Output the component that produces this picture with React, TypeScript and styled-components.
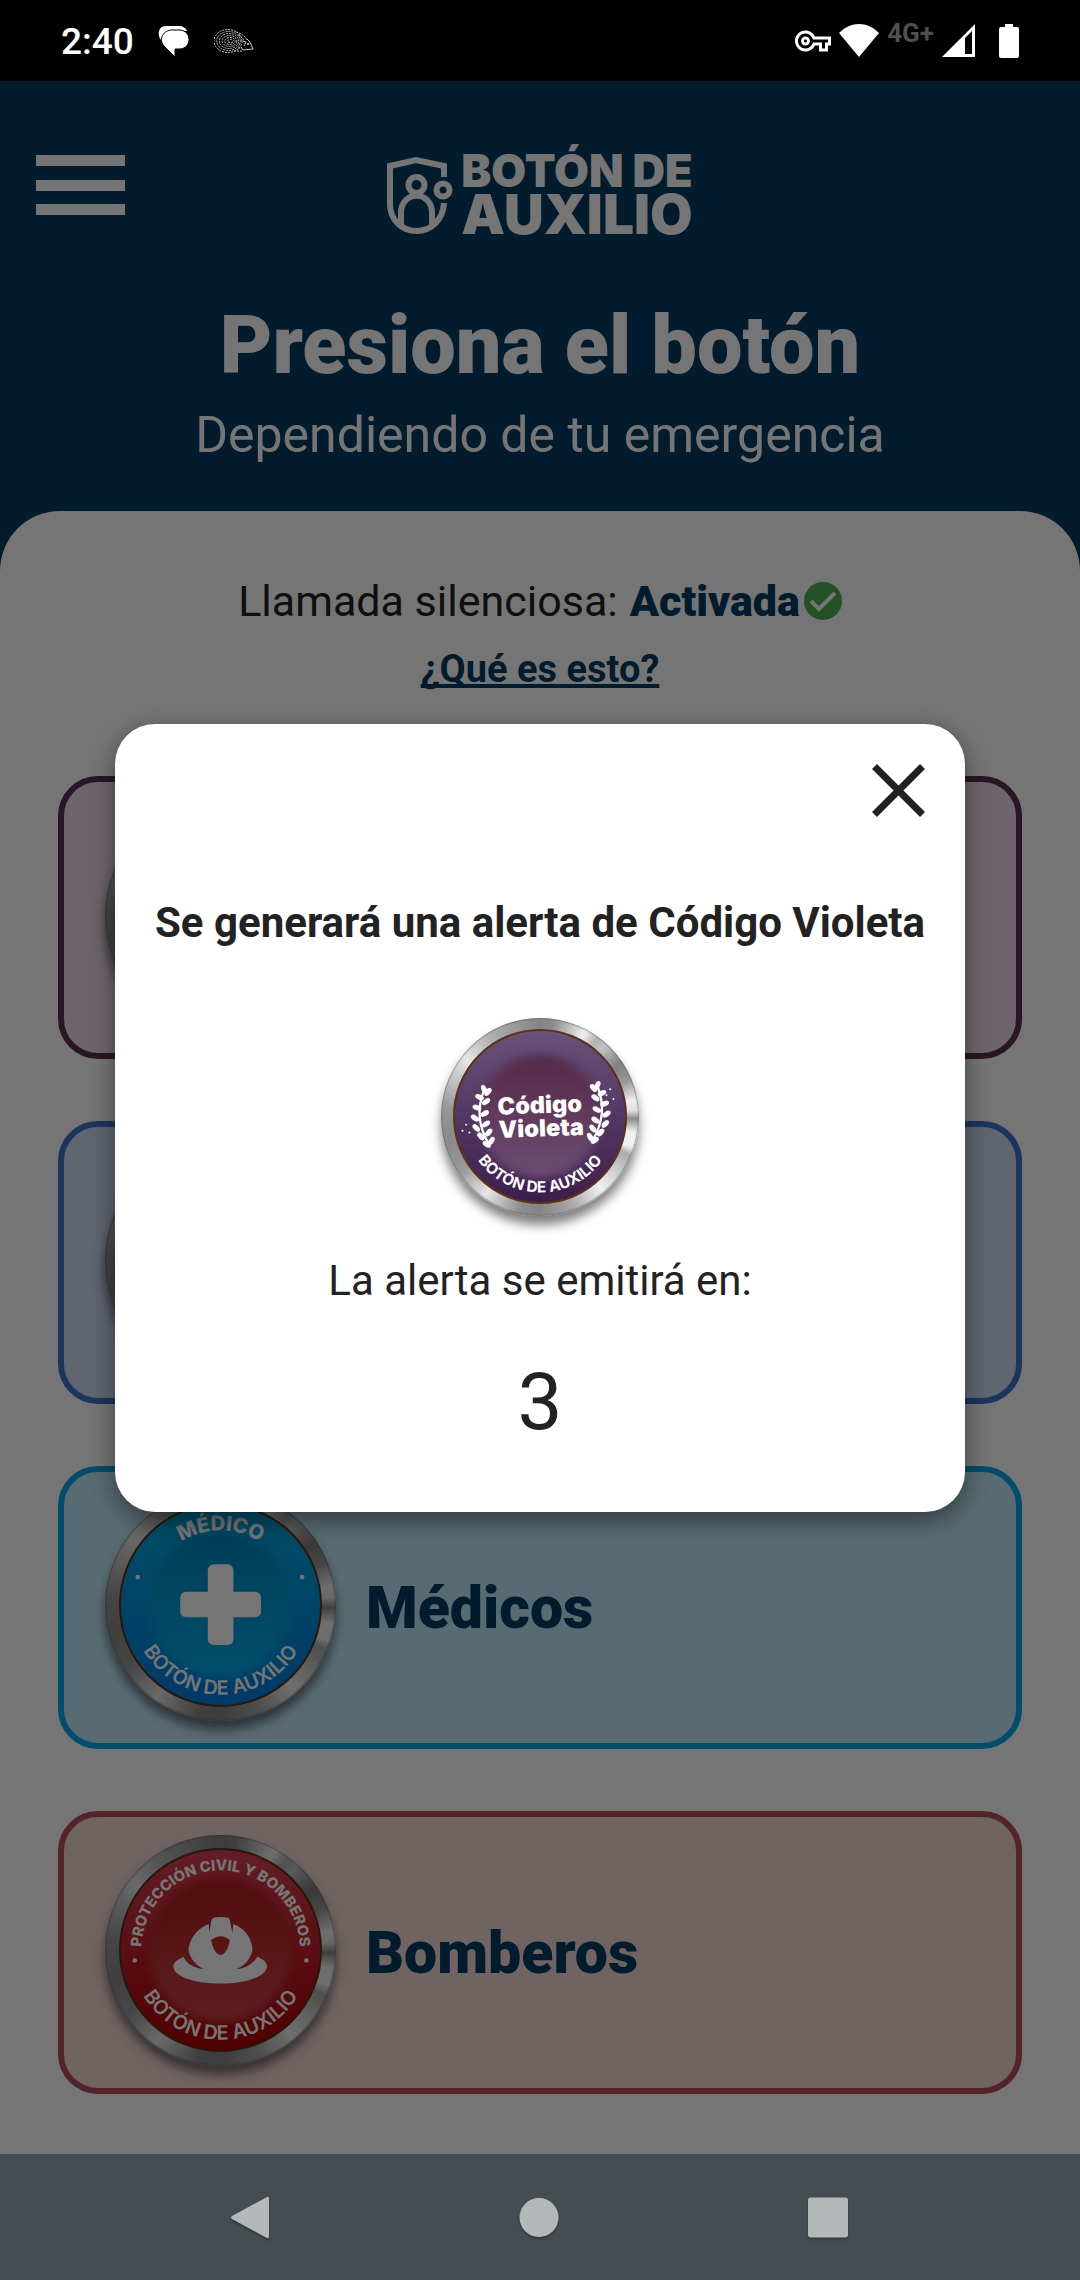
import React, { useId } from "react";
import styled, { createGlobalStyle } from "styled-components";
import { MdOutlineVpnKey } from "react-icons/md";

const color = {
  navy: "#063b62",
  white: "#ffffff",
  ink: "#222222",
  navBar: "#454d52",
  navIcon: "#b4b8b9",
  green: "#4caf50",
};

const GlobalStyle = createGlobalStyle`
  *, *::before, *::after { box-sizing: border-box; }
  body {
    margin: 0;
    font-family: Roboto, "Liberation Sans", sans-serif;
    color: ${color.ink};
    background: #000;
  }
  button { font: inherit; color: inherit; border: 0; background: none; padding: 0; cursor: pointer; }
  h1, h2, p { margin: 0; }
  svg { display: block; }
`;

const Phone = styled.div`
  display: flex;
  flex-direction: column;
  min-height: 100vh;
`;

/* ---------- status bar ---------- */

const StatusBar = styled.div`
  display: flex;
  align-items: center;
  justify-content: space-between;
  height: 81px;
  padding: 0 61px;
  background: #000;
  color: ${color.white};
`;

const StatusGroup = styled.div<{ $gap: number }>`
  display: flex;
  align-items: center;
  gap: ${(p) => p.$gap}px;
`;

const Clock = styled.span`
  padding-top: 2px;
  font-size: 37px;
  font-weight: 500;
  line-height: 44px;
`;

const NetworkType = styled.span`
  padding-bottom: 16px;
  font-size: 26px;
  font-weight: 700;
  line-height: 28px;
  color: #4f4f4f;
`;

/* ---------- app ---------- */

const Screen = styled.div`
  position: relative;
  flex: 1;
  display: flex;
  flex-direction: column;
  background: ${color.navy};
`;

const Header = styled.header`
  padding: 55px 36px 44px;
  color: ${color.white};
  text-align: center;
`;

const TopBar = styled.div`
  display: grid;
  grid-template-columns: 1fr auto 1fr;
  align-items: center;
`;

const MenuButton = styled.button`
  display: flex;
  flex-direction: column;
  justify-content: space-between;
  width: 89px;
  height: 60px;
`;

const MenuLine = styled.span`
  height: 11px;
  background: ${color.white};
`;

const Brand = styled.div`
  display: flex;
  align-items: flex-end;
  gap: 8px;
  padding-top: 12px;
`;

const BrandName = styled.div`
  display: flex;
  flex-direction: column;
  font-family: Inter, Lato, sans-serif;
  font-weight: 900;
  text-align: left;
`;

const BrandLine = styled.span<{ $size: number; $line: number }>`
  font-size: ${(p) => p.$size}px;
  line-height: ${(p) => p.$line}px;
`;

const Title = styled.h1`
  margin-top: 64px;
  font-size: 81px;
  font-weight: 900;
  line-height: 96px;
`;

const Subtitle = styled.p`
  margin-top: 9px;
  font-size: 50px;
  line-height: 64px;
`;

const Panel = styled.main`
  flex: 1;
  display: flex;
  flex-direction: column;
  align-items: center;
  padding: 65px 58px 60px;
  border-radius: 60px 60px 0 0;
  background: ${color.white};
`;

const SilentCall = styled.p`
  display: flex;
  align-items: center;
  font-size: 43px;
  line-height: 50px;
`;

const Active = styled.strong`
  margin: 0 4px 0 12px;
  font-weight: 900;
  color: ${color.navy};
`;

const HelpLink = styled.a`
  margin-top: 21px;
  font-size: 38px;
  font-weight: 700;
  line-height: 44px;
  color: ${color.navy};
  text-decoration: underline;
  text-decoration-thickness: 4px;
  text-decoration-skip-ink: none;
`;

const CardList = styled.div`
  align-self: stretch;
  display: flex;
  flex-direction: column;
  gap: 62px;
  margin-top: 85px;
`;

const Card = styled.button<{ $border: string; $fill: string }>`
  display: flex;
  align-items: center;
  gap: 30px;
  height: 283px;
  padding: 0 42px 5px 41px;
  border: 6px solid ${(p) => p.$border};
  border-radius: 40px;
  background: ${(p) => p.$fill};
  text-align: left;
`;

const CardLabel = styled.span`
  padding-top: 6px;
  font-size: 59px;
  font-weight: 900;
  line-height: 68px;
  color: ${color.navy};
`;

/* ---------- medal ---------- */

const Ring = styled.span<{ $size: number }>`
  isolation: isolate;
  flex: none;
  display: grid;
  place-items: center;
  width: ${(p) => p.$size}px;
  height: ${(p) => p.$size}px;
  border-radius: 50%;
  background: conic-gradient(
    #848484 0deg, #8c8c8c 8deg, #f0f0f0 28deg, #b0b0b0 36deg, #c4c4c4 42deg,
    #808080 56deg, #999 68deg, #f0f0f0 80deg, #e0e0e0 86deg, #8a8a8a 91deg,
    #f0f0f0 99deg, #f0f0f0 108deg, #aaa 113deg, #cfcfcf 125deg, #f0f0f0 140deg,
    #a8a8a8 160deg, #848484 180deg, #8c8c8c 192deg, #e6e6e6 215deg,
    #9a9a9a 235deg, #8a8a8a 255deg, #969696 275deg, #e6e6e6 308deg,
    #b0b0b0 328deg, #848484 360deg
  );
  box-shadow: inset 0 0 1px 1px rgba(90, 90, 90, 0.5), 0 9px 11px rgba(0, 0, 0, 0.5);
`;

const Face = styled.span<{ $top: string; $bottom: string }>`
  display: grid;
  place-items: center;
  width: 88%;
  height: 88%;
  border: 2px solid #5b3214;
  border-radius: 50%;
  background: linear-gradient(${(p) => p.$top}, ${(p) => p.$bottom});
  overflow: hidden;

  > * { grid-area: 1 / 1; }
`;

const Glow = styled.span<{ $top: string; $bottom: string }>`
  width: 72%;
  height: 72%;
  border-radius: 50%;
  background: linear-gradient(${(p) => p.$top}, ${(p) => p.$bottom});
  filter: blur(5px);
`;

const Emblem = styled.svg`
  z-index: 1;
  width: 100%;
  height: 100%;
  overflow: visible;
  fill: ${color.white};
  font-family: Inter, Lato, sans-serif;
`;

type MedalColors = { outer: [string, string]; inner: [string, string] };

const palette: Record<"violet" | "blue" | "medical" | "fire", MedalColors> = {
  violet: { outer: ["#69527a", "#3d1d4c"], inner: ["#552846", "#6d4d75"] },
  blue: { outer: ["#3c6fc0", "#123a80"], inner: ["#1d4488", "#3c6fc0"] },
  medical: { outer: ["#00aae0", "#007ee0"], inner: ["#0086be", "#00aeec"] },
  fire: { outer: ["#d94154", "#ae0000"], inner: ["#b21c1c", "#ca4348"] },
};

function Medal({ size, colors, children }: { size: number; colors: MedalColors; children?: React.ReactNode }) {
  return (
    <Ring $size={size}>
      <Face $top={colors.outer[0]} $bottom={colors.outer[1]}>
        <Glow $top={colors.inner[0]} $bottom={colors.inner[1]} />
        {children}
      </Face>
    </Ring>
  );
}

/* Text that follows a circle centred on the origin. */
function ArcText({ radius, side, size, weight, children }: {
  radius: number; side: "top" | "bottom"; size: number; weight: number; children: string;
}) {
  const id = useId();
  const sweep = side === "top" ? 1 : 0;
  return (
    <>
      <path id={id} fill="none" d={`M${-radius} 0A${radius} ${radius} 0 0 ${sweep} ${radius} 0`} />
      <text fontSize={size} fontWeight={weight} textAnchor="middle">
        <textPath href={`#${id}`} startOffset="50%">{children}</textPath>
      </text>
    </>
  );
}

function MedicalEmblem() {
  return (
    <Emblem viewBox="-303 -303 606 606">
      <ArcText radius={226} side="top" size={62} weight={800}>MÉDICO</ArcText>
      <ArcText radius={274} side="bottom" size={60} weight={600}>BOTÓN DE AUXILIO</ArcText>
      <circle cx="-252" cy="-84" r="7" />
      <circle cx="248" cy="-84" r="7" />
      <rect x="-39" y="-123" width="78" height="246" rx="18" />
      <rect x="-123" y="-39" width="246" height="77" rx="18" />
    </Emblem>
  );
}

function FireEmblem() {
  return (
    <Emblem viewBox="-303 -303 606 606">
      <ArcText radius={241} side="top" size={45} weight={800}>PROTECCIÓN CIVIL Y BOMBEROS</ArcText>
      <ArcText radius={274} side="bottom" size={60} weight={600}>BOTÓN DE AUXILIO</ArcText>
      <circle cx="-261" cy="33" r="7" />
      <circle cx="261" cy="33" r="7" />
      <path d="M-22-97Q0-101 24-97L28-90L36-50L38-78C72-66 96-36 97 2C90 30 70 52 46 60C92 56 104 30 113 22C128 30 142 38 141 52C136 86 70 103 0 103S-140 86-144 52C-144 38-128 30-113 22C-104 40-88 56-50 60C-74 48-92 30-98 2C-94-38-68-66-36-78L-34-52L-28-90ZM-29-29C-24-4-14 16 0 16S24-4 28-29Q0-53-29-29Z" fillRule="evenodd" />
    </Emblem>
  );
}

const leaves: [number, number, number][] = [
  [-166, -82, 65], [-180, -58, 25], [-154, -74, -50], [-188, -26, 20], [-160, -44, -35],
  [-194, 6, 35], [-164, -8, -30], [-190, 36, 45], [-160, 24, -35], [-176, 62, 50],
  [-152, 50, -50], [-158, 86, 35], [-144, 76, -60],
];

function Laurel() {
  return (
    <g>
      <path d="M-166-80C-186-30-186 30-150 88" fill="none" stroke="#fff" strokeWidth="7" />
      {leaves.map(([x, y, angle]) => (
        <ellipse key={`${x},${y}`} cx={x} cy={y} rx="14" ry="8" transform={`rotate(${angle} ${x} ${y})`} />
      ))}
    </g>
  );
}

const sparks: [number, number][] = [
  [-226, 26], [-237, 45], [-216, 50], [214, -82], [203, -64], [224, -52],
];

function VioletEmblem() {
  return (
    <Emblem viewBox="-260 -260 520 520">
      <g transform="translate(-5 0)"><Laurel /></g>
      <g transform="translate(9 -12) scale(-1 1)"><Laurel /></g>
      {sparks.map(([x, y]) => <circle key={x} cx={x} cy={y} r="3" />)}
      <g transform="rotate(-2)" fontSize="72" fontWeight="900" textAnchor="middle">
        <text x="0" y="-9">Código</text>
        <text x="2" y="62">Violeta</text>
      </g>
      <ArcText radius={233} side="bottom" size={47} weight={700}>BOTÓN DE AUXILIO</ArcText>
    </Emblem>
  );
}

/* ---------- logo and icons ---------- */

const ShieldIcon = () => (
  <svg width="66" height="80" viewBox="0 18 66 80" fill="none" stroke="#fff" strokeWidth="6">
    <path d="M57 41V30L29 24L3 30V68C3 84 15 95 29.500 95S56 84 57 67" />
    <circle cx="29.500" cy="49" r="8" />
    <circle cx="56" cy="54" r="6.500" />
    <path d="M14 91V77C14 54 45 54 45 77V91" />
  </svg>
);

const BubbleIcon = () => (
  <svg width="32" height="32" viewBox="0 0 32 32" fill="#fff">
    <path d="M8 1H20C25 1 28 3 29 6H12C7 7 4 10 3 15C-1 10 0 1 8 1Z" />
    <path d="M13 5H22C34 6 34 23 22 24H17V32L7 22C0 16 4 6 13 5Z" stroke="#000" strokeWidth="1" />
  </svg>
);

const HedgehogIcon = () => (
  <svg width="40" height="24" viewBox="0 0 40 24" fill="none" stroke="#ccc" strokeWidth="1">
    <g strokeDasharray="2 1">
      {[0, 1, 2, 3, 4, 5].map((i) => (
        <ellipse key={i} cx={14 + i / 2} cy="12" rx={14 - i * 2.2} ry={11.5 - i * 2} strokeDashoffset={i} />
      ))}
      <path d="M22 3Q30 5 33 11M24 6Q29 8 30 12M20 22H29M24 19H28" />
    </g>
    <path d="M33 10L36 13L39 20L29 21L27 18M29 12L32 13L30 17" />
    <circle cx="34" cy="15" r="1" fill="#ddd" stroke="none" />
  </svg>
);

const WifiIcon = () => (
  <svg width="40" height="33" viewBox="0 0 40 33" fill="#fff">
    <path d="M0 9C12-3 28-3 40 9L20 33Z" />
  </svg>
);

const SignalIcon = () => (
  <svg width="33" height="33" viewBox="0 0 33 33" fill="#fff">
    <path fillRule="evenodd" d="M33 0V33H0ZM30 7L23 14V30H30Z" />
  </svg>
);

const BatteryIcon = () => (
  <svg width="20" height="34" viewBox="0 0 20 34" fill="#fff">
    <path d="M6 0H14V3H18Q20 3 20 5V32Q20 34 18 34H2Q0 34 0 32V5Q0 3 2 3H6Z" />
  </svg>
);

const CheckIcon = () => (
  <svg width="38" height="38" viewBox="0 0 38 38">
    <circle cx="19" cy="19" r="19" fill={color.green} />
    <path d="M7 19L15 27L31 11" fill="none" stroke="#fff" strokeWidth="4" />
  </svg>
);

const CloseIcon = () => (
  <svg width="53" height="53" viewBox="0 0 53 53">
    <path d="M2.500 2.500L50.500 50.500M50.500 2.500L2.500 50.500" stroke={color.ink} strokeWidth="7" />
  </svg>
);

/* ---------- dialog ---------- */

const Scrim = styled.div`
  position: absolute;
  inset: 0;
  display: grid;
  place-items: center;
  padding: 0 115px;
  background: rgba(0, 0, 0, 0.54);
`;

const Dialog = styled.section`
  display: flex;
  flex-direction: column;
  align-items: center;
  width: 100%;
  padding: 40px 40px 62px;
  border-radius: 40px;
  background: ${color.white};
  box-shadow: 0 8px 24px rgba(0, 0, 0, 0.45);
  text-align: center;
`;

const CloseButton = styled.button`
  align-self: flex-end;
`;

const DialogTitle = styled.h2`
  margin: 81px 0 70px;
  font-size: 42px;
  font-weight: 700;
  line-height: 50px;
  white-space: nowrap;
`;

const DialogText = styled.p`
  margin-top: 40px;
  font-size: 42px;
  line-height: 50px;
`;

const Countdown = styled.p`
  margin-top: 48px;
  font-size: 80px;
  line-height: 96px;
`;

/* ---------- system navigation ---------- */

const NavBar = styled.nav`
  display: flex;
  align-items: center;
  justify-content: space-between;
  height: 126px;
  padding: 0 232px 0 230px;
  background: ${color.navBar};
`;

const NavButton = styled.button`
  filter: drop-shadow(0 2px 1px rgba(0, 0, 0, 0.25));
`;

const navShapes = [
  { name: "Atrás", shape: <path d="M37 1Q39 0 39 3V40Q39 43 37 42L2 23Q0 21.500 2 20Z" /> },
  { name: "Inicio", shape: <circle cx="20" cy="21.500" r="19.500" /> },
  { name: "Recientes", shape: <rect x="0" y="1.500" width="40" height="40" rx="3" /> },
];

export default function App() {
  return (
    <>
      <GlobalStyle />
      <Phone>
        <StatusBar>
          <StatusGroup $gap={24}>
            <Clock>2:40</Clock>
            <BubbleIcon />
            <HedgehogIcon />
          </StatusGroup>
          <StatusGroup $gap={24}>
            <StatusGroup $gap={8}>
              <MdOutlineVpnKey size={36} />
              <WifiIcon />
              <NetworkType>4G+</NetworkType>
              <SignalIcon />
            </StatusGroup>
            <BatteryIcon />
          </StatusGroup>
        </StatusBar>

        <Screen>
          <Header>
            <TopBar>
              <MenuButton aria-label="Menú">
                <MenuLine />
                <MenuLine />
                <MenuLine />
              </MenuButton>
              <Brand>
                <ShieldIcon />
                <BrandName>
                  <BrandLine $size={45} $line={46}>BOTÓN DE</BrandLine>
                  <BrandLine $size={55} $line={40}>AUXILIO</BrandLine>
                </BrandName>
              </Brand>
            </TopBar>
            <Title>Presiona el botón</Title>
            <Subtitle>Dependiendo de tu emergencia</Subtitle>
          </Header>

          <Panel>
            <SilentCall>
              Llamada silenciosa: <Active>Activada</Active>
              <CheckIcon />
            </SilentCall>
            <HelpLink href="#ayuda">¿Qué es esto?</HelpLink>

            <CardList>
              <Card $border="#593053" $fill="#eddce9" aria-label="Código Violeta">
                <Medal size={231} colors={palette.violet} />
              </Card>
              <Card $border="#3b75c8" $fill="#d1dcf3">
                <Medal size={231} colors={palette.blue} />
              </Card>
              <Card $border="#07a5e9" $fill="#c1e9fa">
                <Medal size={231} colors={palette.medical}><MedicalEmblem /></Medal>
                <CardLabel>Médicos</CardLabel>
              </Card>
              <Card $border="#b74e5d" $fill="#f3d9d5">
                <Medal size={231} colors={palette.fire}><FireEmblem /></Medal>
                <CardLabel>Bomberos</CardLabel>
              </Card>
            </CardList>
          </Panel>

          <Scrim>
            <Dialog role="dialog" aria-modal="true" aria-labelledby="alert-title">
              <CloseButton aria-label="Cerrar"><CloseIcon /></CloseButton>
              <DialogTitle id="alert-title">Se generará una alerta de Código Violeta</DialogTitle>
              <Medal size={198} colors={palette.violet}><VioletEmblem /></Medal>
              <DialogText>La alerta se emitirá en:</DialogText>
              <Countdown>3</Countdown>
            </Dialog>
          </Scrim>
        </Screen>

        <NavBar>
          {navShapes.map(({ name, shape }) => (
            <NavButton key={name} aria-label={name}>
              <svg width="40" height="43" viewBox="0 0 40 43" fill={color.navIcon}>{shape}</svg>
            </NavButton>
          ))}
        </NavBar>
      </Phone>
    </>
  );
}
